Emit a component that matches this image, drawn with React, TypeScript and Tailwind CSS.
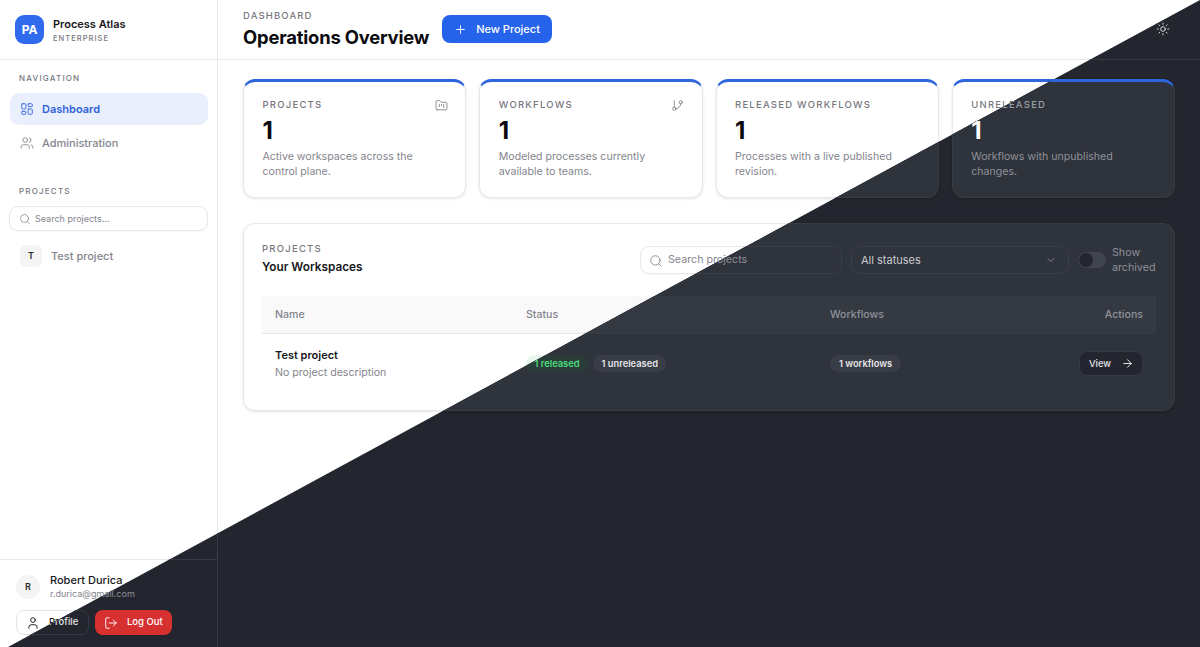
import {
  ArrowRight,
  ChevronDown,
  FolderKanban,
  GitBranch,
  LayoutDashboard,
  LogOut,
  Plus,
  Search,
  Sun,
  User,
  Users,
} from "lucide-react";

const light = {
  page: "bg-white",
  line: "border-[#e8e8ea]",
  title: "text-[#0b0b0f]",
  strong: "text-[#18181b]",
  label: "text-[#77777f]",
  muted: "text-[#85858d]",
  icon: "text-[#6f6f77]",
  navActive: "bg-[#e9effd] text-[#2f62d9]",
  chip: "bg-[#f4f4f5] text-[#27272a]",
  card: "bg-white border-[#e8e8ea] shadow-[0_1px_3px_rgba(0,0,0,0.1)]",
  field: "bg-white border-[#e8e8ea] shadow-[0_1px_2px_rgba(0,0,0,0.04)]",
  fieldText: "text-[#3f3f46]",
  thead: "bg-[#f9f9fa]",
  good: "bg-[#e8f7ee] text-[#2f9e5d]",
  neutral: "bg-[#f1f1f3] text-[#27272a]",
  ghost: "bg-white border-[#e4e4e7] text-[#18181b]",
  knob: "bg-[#ffffff]",
  track: "bg-[#e4e4e7]",
};

const dark = {
  page: "bg-[#23262e]",
  line: "border-[#363a43]",
  title: "text-white",
  strong: "text-[#eeeef0]",
  label: "text-[#9b9ea6]",
  muted: "text-[#8e9199]",
  icon: "text-[#a1a4ab]",
  navActive: "bg-[#2c3550] text-[#7aa2f7]",
  chip: "bg-[#31353e] text-[#e4e4e7]",
  card: "bg-[#2f333c] border-[#383c45] shadow-[0_1px_3px_rgba(0,0,0,0.2)]",
  field: "bg-[#2f333c] border-[#3a3e47] shadow-none",
  fieldText: "text-[#c9cbd0]",
  thead: "bg-[#353942]",
  good: "bg-[#2a3d38] text-[#4ade80]",
  neutral: "bg-[#393d46] text-[#e4e4e7]",
  ghost: "bg-[#23262e] border-[#363a43] text-[#e4e4e7]",
  knob: "bg-[#23262e]",
  track: "bg-[#40444d]",
};

type Theme = typeof light;

const stats = [
  { label: "PROJECTS", desc: ["Active workspaces across the", "control plane."], icon: FolderKanban },
  { label: "WORKFLOWS", desc: ["Modeled processes currently", "available to teams."], icon: GitBranch },
  { label: "RELEASED WORKFLOWS", desc: ["Processes with a live published", "revision."] },
  { label: "UNRELEASED", desc: ["Workflows with unpublished", "changes."] },
];

function Sidebar({ t }: { t: Theme }) {
  return (
    <aside className={`flex w-[218px] shrink-0 flex-col border-r ${t.line}`}>
      <div className={`flex h-[60px] items-center gap-[9px] border-b pl-[15px] ${t.line}`}>
        <div className="flex h-[29px] w-[29px] items-center justify-center rounded-[9px] bg-[#2f6bec] text-[12px] font-bold text-white">
          PA
        </div>
        <div className="pt-[3px]">
          <div className={`text-[11px] leading-[15px] font-semibold ${t.strong}`}>Process Atlas</div>
          <div className={`mt-[1px] text-[7.5px] leading-[12px] font-medium tracking-[0.14em] ${t.label}`}>ENTERPRISE</div>
        </div>
      </div>

      <div className="pt-[12px] pr-[9px] pl-[10px]">
        <div className={`pl-[9px] text-[8px] leading-[12px] font-medium tracking-[0.15em] ${t.label}`}>NAVIGATION</div>
        <div className={`mt-[9px] flex h-[32px] items-center gap-[8px] rounded-[9px] pl-[10px] text-[11px] font-semibold ${t.navActive}`}>
          <LayoutDashboard size={14} strokeWidth={1.5} />
          Dashboard
        </div>
        <div className={`mt-[2px] flex h-[32px] items-center gap-[8px] pl-[10px] text-[11px] font-medium ${t.muted}`}>
          <Users size={14} strokeWidth={1.5} />
          Administration
        </div>

        <div className={`mt-[26px] pl-[9px] text-[8px] leading-[12px] font-medium tracking-[0.15em] ${t.label}`}>PROJECTS</div>
        <div className={`mt-[9px] -ml-[1px] flex h-[25px] items-center gap-[4px] rounded-[9px] border pl-[9px] text-[9px] ${t.field} ${t.muted}`}>
          <Search size={12} strokeWidth={1.5} />
          Search projects...
        </div>
        <div className={`mt-[14px] flex items-center gap-[9px] pl-[10px] text-[11px] font-medium ${t.muted}`}>
          <div className={`flex h-[22px] w-[22px] items-center justify-center rounded-[6px] text-[9px] font-semibold ${t.chip}`}>T</div>
          Test project
        </div>
      </div>

      <div className={`mt-auto h-[88px] border-t px-[16px] pt-[13px] ${t.line}`}>
        <div className="flex items-center gap-[10px]">
          <div className={`flex h-[24px] w-[24px] items-center justify-center rounded-full text-[9px] font-semibold ${t.chip}`}>R</div>
          <div>
            <div className={`text-[11px] leading-[14px] font-medium ${t.strong}`}>Robert Durica</div>
            <div className={`text-[9px] leading-[14px] ${t.muted}`}>r.durica@gmail.com</div>
          </div>
        </div>
        <div className="mt-[9px] flex gap-[6px]">
          <div className={`flex h-[25px] w-[73px] items-center gap-[9px] rounded-[8px] border pl-[9px] text-[9.5px] font-medium ${t.ghost}`}>
            <User size={14} strokeWidth={1.6} />
            Profile
          </div>
          <div className="flex h-[25px] w-[77px] items-center gap-[9px] rounded-[8px] bg-[#d63030] pl-[9px] text-[9.5px] font-medium text-white">
            <LogOut size={14} strokeWidth={1.6} />
            Log Out
          </div>
        </div>
      </div>
    </aside>
  );
}

function StatCard({ t, label, desc, icon: Icon }: { t: Theme; label: string; desc: string[]; icon?: typeof Sun }) {
  return (
    <div className={`h-[119px] rounded-[12px] border border-t-[3px] border-t-[#2f66dd] px-[18.5px] pt-[16px] ${t.card}`}>
      <div className="flex h-[14px] items-center justify-between">
        <span className={`text-[9.5px] font-medium tracking-[0.13em] ${t.label}`}>{label}</span>
        {Icon && <Icon size={13} strokeWidth={1.4} className={`-mr-[1px] ${t.icon}`} />}
      </div>
      <div className={`mt-[4px] text-[24px] leading-[30px] font-bold ${t.title}`}>1</div>
      <div className={`mt-[2.5px] text-[10.6px] leading-[15px] ${t.muted}`}>
        {desc.map((line) => (
          <div key={line}>{line}</div>
        ))}
      </div>
    </div>
  );
}

function Page({ t }: { t: Theme }) {
  return (
    <div className={`flex h-[647px] w-[1200px] overflow-hidden font-['Inter',sans-serif] ${t.page}`}>
      <Sidebar t={t} />
      <main className="min-w-0 flex-1">
        <header className={`flex h-[60px] items-start border-b pl-[25px] pr-[30px] ${t.line}`}>
          <div className="pt-[9px]">
            <div className={`text-[9.5px] leading-[14px] font-medium tracking-[0.12em] ${t.label}`}>DASHBOARD</div>
            <h1 className={`mt-[1px] text-[18.4px] leading-[26px] font-bold tracking-[-0.01em] ${t.title}`}>Operations Overview</h1>
          </div>
          <div className="mt-[15px] ml-[13px] flex h-[28px] w-[110px] items-center gap-[9px] rounded-[8px] bg-[#2563eb] pl-[12px] text-[11px] font-medium text-white">
            <Plus size={13} strokeWidth={1.8} />
            New Project
          </div>
          <Sun size={14} strokeWidth={1.5} className={`mt-[22px] ml-auto ${t.strong}`} />
        </header>

        <div className="px-[25px] pt-[19px]">
          <div className="grid grid-cols-4 gap-[13px]">
            {stats.map((s) => (
              <StatCard key={s.label} t={t} {...s} />
            ))}
          </div>

          <section className={`mt-[25px] h-[188px] rounded-[12px] border px-[18px] pt-[18px] ${t.card}`}>
            <div className="flex items-start">
              <div>
                <div className={`text-[9.5px] leading-[13px] font-medium tracking-[0.13em] ${t.label}`}>PROJECTS</div>
                <div className={`mt-[3px] text-[11.8px] leading-[18px] font-semibold ${t.strong}`}>Your Workspaces</div>
              </div>
              <div className={`mt-[4px] ml-auto flex h-[28px] w-[202px] items-center gap-[5px] rounded-[9px] border pt-[1px] pl-[8px] text-[10.7px] ${t.field} ${t.muted}`}>
                <Search size={14} strokeWidth={1.5} />
                Search projects
              </div>
              <div className={`mt-[4px] ml-[9px] flex h-[28px] w-[218px] items-center justify-between rounded-[9px] border pr-[11px] pl-[9px] text-[11px] ${t.field} ${t.fieldText}`}>
                All statuses
                <ChevronDown size={12} strokeWidth={1.6} className={t.muted} />
              </div>
              <div className="mt-[2.5px] ml-[9px] flex items-center gap-[6px]">
                <div className={`flex h-[16px] w-[28px] items-center rounded-full pl-[1px] ${t.track}`}>
                  <div className={`h-[14px] w-[14px] rounded-full ${t.knob}`} />
                </div>
                <div className={`w-[44px] text-[10.7px] leading-[15.5px] ${t.muted}`}>Show archived</div>
              </div>
            </div>

            <div className={`mt-[20px] grid h-[38px] grid-cols-[251px_304px_1fr] items-center border-b px-[13px] text-[10.6px] font-medium ${t.thead} ${t.line} ${t.muted}`}>
              <span>Name</span>
              <span>Status</span>
              <span className="flex justify-between">
                Workflows
                <span>Actions</span>
              </span>
            </div>

            <div className="grid h-[59px] grid-cols-[251px_304px_1fr] items-center px-[13px]">
              <div>
                <div className={`text-[11px] leading-[17px] font-semibold ${t.strong}`}>Test project</div>
                <div className={`text-[10.6px] leading-[17px] ${t.muted}`}>No project description</div>
              </div>
              <div className="flex gap-[5px]">
                <span className={`flex h-[17px] items-center rounded-full px-[8.5px] text-[9.3px] font-semibold ${t.good}`}>1 released</span>
                <span className={`flex h-[17px] items-center rounded-full px-[8.5px] text-[9.3px] font-semibold ${t.neutral}`}>1 unreleased</span>
              </div>
              <div className="flex items-center justify-between">
                <span className={`flex h-[17px] items-center rounded-full px-[9px] text-[9.3px] font-semibold ${t.neutral}`}>1 workflows</span>
                <span className={`flex h-[25px] w-[64px] items-center gap-[10px] rounded-[8px] border pl-[9px] text-[9.3px] font-medium ${t.ghost}`}>
                  View
                  <ArrowRight size={13} strokeWidth={1.8} />
                </span>
              </div>
            </div>
          </section>
        </div>
      </main>
    </div>
  );
}

export default function App() {
  return (
    <div className="relative h-[647px] w-[1200px] overflow-hidden">
      <Page t={light} />
      {/* dark half laid over the light one along the diagonal */}
      <div className="absolute inset-0 [clip-path:polygon(1200px_0,1200px_647px,8px_647px)]">
        <Page t={dark} />
      </div>
    </div>
  );
}
